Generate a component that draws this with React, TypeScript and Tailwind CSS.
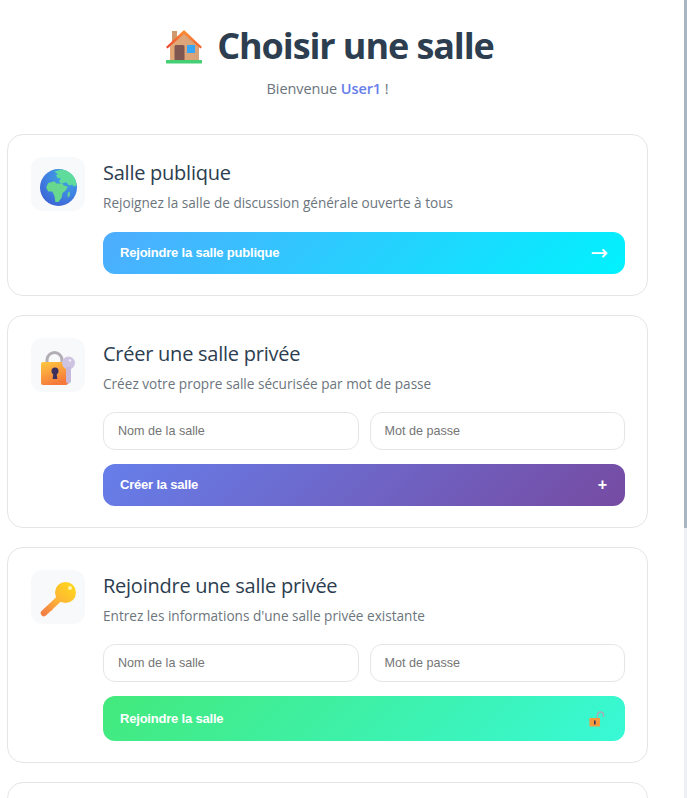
import type { ReactNode } from "react";

/* ── Emoji drawings ─────────────────────────────────────────────────────── */

const HouseEmoji = () => (
  <svg width="36" height="35" viewBox="0 0 36 35" className="shrink-0">
    <defs>
      <linearGradient id="wall" x1="0" y1="0" x2="1" y2="0">
        <stop offset="0" stopColor="#e2a877" />
        <stop offset="1" stopColor="#d8a27a" />
      </linearGradient>
      <linearGradient id="roof" x1="0" y1="1" x2="0.5" y2="0">
        <stop offset="0" stopColor="#ea3f30" />
        <stop offset="1" stopColor="#ff9333" />
      </linearGradient>
    </defs>
    <rect x="6" y="2" width="5" height="12" fill="#cf9a6c" />
    <path d="M4 17 18 4l15 13v15H4z" fill="url(#wall)" />
    <path d="M18 1 36 18l-1.500 1.500L18 5 1.500 19.500 0 18z" fill="url(#roof)" />
    <path d="M8.500 17.500q0-1.500 1.500-1.500h7q1.500 0 1.500 1.500V32h-10z" fill="#7f5650" />
    <rect x="21" y="16" width="8" height="8" fill="#38a6f7" />
    <rect x="0" y="31" width="36" height="3.500" rx="0.500" fill="#45cf74" />
  </svg>
);

const GlobeEmoji = () => (
  <svg width="37" height="37" viewBox="0 0 36 36" className="mt-[6px]">
    <defs>
      <radialGradient id="sea" cx="0.7" cy="0.2" r="0.95">
        <stop offset="0" stopColor="#3fa9dd" />
        <stop offset="0.55" stopColor="#3f82e2" />
        <stop offset="1" stopColor="#3b5bd0" />
      </radialGradient>
    </defs>
    <circle cx="18" cy="18" r="18" fill="url(#sea)" />
    <path
      d="M14 2.500 21 .5q9 1.500 13 8.500 1.500 4 1.500 7l-3 1-1-2-3 1-3-3-5 1-2-2 2-3-3 0-2-3 2-1z"
      fill="#5fdc9c"
    />
    <path
      d="M8 13.500l6-1.500 2 2 6 0 1 2 4 1-2 4-3 2-1 5-3 4-3 0-1-6-2-4-4 0-2-4z"
      fill="#67d88e"
    />
    <path d="M27 23l2-1 0 4-2 2z" fill="#67d88e" />
  </svg>
);

const LockEmoji = () => (
  <svg width="34" height="34" viewBox="0 0 34 34" className="mt-[6px]">
    <defs>
      <linearGradient id="lockBody" x1="0" y1="0" x2="0.4" y2="1">
        <stop offset="0" stopColor="#ffc93f" />
        <stop offset="1" stopColor="#f57a3c" />
      </linearGradient>
    </defs>
    <path
      d="M6 14V9a7.500 7.500 0 0 1 15 0v5"
      fill="none"
      stroke="#b3aeb6"
      strokeWidth="3"
    />
    <rect x="0" y="11" width="27" height="23" rx="2" fill="url(#lockBody)" />
    <circle cx="14" cy="20" r="3.500" fill="#3b2f5e" />
    <path d="M12.500 21h3l.8 7h-4.600z" fill="#3b2f5e" />
    <circle cx="27.500" cy="12" r="6.500" fill="#cfc3e2" />
    <circle cx="29" cy="9.500" r="1.200" fill="#f1ecf7" />
    <path d="M25 16h5v15l-2.500 2-2.500-2z" fill="#c6b9dc" />
  </svg>
);

const KeyEmoji = () => (
  <svg width="36" height="36" viewBox="0 0 36 36" className="mt-[6px]">
    <defs>
      <linearGradient id="keyFill" gradientUnits="userSpaceOnUse" x1="30" y1="4" x2="4" y2="32">
        <stop offset="0" stopColor="#ffd21f" />
        <stop offset="0.5" stopColor="#fdb437" />
        <stop offset="1" stopColor="#f37f45" />
      </linearGradient>
    </defs>
    <path
      d="M20 16 4 31"
      fill="none"
      stroke="url(#keyFill)"
      strokeWidth="6.500"
      strokeLinecap="round"
    />
    <path d="M10 24l3 3-2 2-3-3z" fill="url(#keyFill)" />
    <circle cx="25.500" cy="10.500" r="10.500" fill="url(#keyFill)" />
    <circle cx="30" cy="6" r="2" fill="#fff3b0" />
  </svg>
);

const OpenLockEmoji = () => (
  <svg width="16" height="16" viewBox="0 0 16 16">
    <path
      d="M8.500 8V4a3 3 0 0 1 6 0v2"
      fill="none"
      stroke="#a5adb5"
      strokeWidth="1.500"
    />
    <rect x="0.500" y="7" width="10.500" height="8.500" fill="#f79a3e" />
    <rect x="5" y="9.500" width="1.600" height="4" fill="#3b2f5e" />
  </svg>
);

/* ── Parts ──────────────────────────────────────────────────────────────── */

type CardProps = {
  icon: ReactNode;
  title: string;
  description: string;
  children?: ReactNode;
};

const RoomCard = ({ icon, title, description, children }: CardProps) => (
  <section className="rounded-[16px] border border-[#e3e6e9] bg-white pt-[22px] pr-[22px] pb-[21px] pl-[23px] flex gap-[18px]">
    <div className="w-[54px] h-[54px] rounded-[12px] bg-[#f8f9fa] flex items-center justify-center shrink-0">
      {icon}
    </div>
    <div className="flex-1 min-w-0">
      <h3 className="text-[20px] leading-[32px] font-medium text-[#2c3e50] font-['Open_Sans',sans-serif] tracking-[-0.25px]">
        {title}
      </h3>
      <p className="mt-[5px] text-[13.6px] leading-[18px] text-[#6c757d] font-['Open_Sans',sans-serif]">
        {description}
      </p>
      {children}
    </div>
  </section>
);

const RoomFields = () => (
  <div className="mt-[19px] flex gap-[11px]">
    <input
      placeholder="Nom de la salle"
      className="flex-1 min-w-0 h-[38px] px-[14px] rounded-[12px] border border-[#e3e6e9] bg-white text-[12.6px] font-['Liberation_Sans',sans-serif] placeholder:text-[#757575]"
    />
    <input
      placeholder="Mot de passe"
      className="flex-1 min-w-0 h-[38px] px-[14px] rounded-[12px] border border-[#e3e6e9] bg-white text-[12.6px] font-['Liberation_Sans',sans-serif] placeholder:text-[#757575]"
    />
  </div>
);

export default function App() {
  return (
    <div className="relative h-[798px] overflow-hidden bg-white">
      <div className="w-[641px] ml-[7px]">
        <header className="pt-[22px] pb-[34px] text-center">
          <h1 className="flex items-center justify-center gap-[15px] h-[48px] pl-[5px] text-[36px] font-bold text-[#2c3e50] font-['Open_Sans',sans-serif] tracking-[-1.1px]">
            <HouseEmoji />
            Choisir une salle
          </h1>
          <p className="mt-[8px] text-[14.5px] leading-[22px] text-[#6c757d] font-['Open_Sans',sans-serif] tracking-[-0.1px]">
            Bienvenue <span className="font-semibold text-[#667eea]">User1</span> !
          </p>
        </header>

        <div className="flex flex-col gap-[19px]">
          <RoomCard
            icon={<GlobeEmoji />}
            title="Salle publique"
            description="Rejoignez la salle de discussion générale ouverte à tous"
          >
            <button className="mt-[20px] w-full h-[42px] rounded-[12px] bg-[linear-gradient(135deg,#4facfe,#00f2fe)] flex items-center justify-between pl-[17px] pr-[17px] text-white text-[13px] tracking-[-0.2px] font-bold font-['Liberation_Sans',sans-serif]">
              <span>Rejoindre la salle publique</span>
              <span className="text-[21px] leading-none font-normal font-['DejaVu_Sans',sans-serif]">→</span>
            </button>
          </RoomCard>

          <RoomCard
            icon={<LockEmoji />}
            title="Créer une salle privée"
            description="Créez votre propre salle sécurisée par mot de passe"
          >
            <RoomFields />
            <button className="mt-[14px] w-full h-[42px] rounded-[12px] bg-[linear-gradient(135deg,#667eea,#764ba2)] flex items-center justify-between pl-[17px] pr-[18px] text-white text-[13px] tracking-[-0.2px] font-bold font-['Liberation_Sans',sans-serif]">
              <span>Créer la salle</span>
              <span className="text-[16px] leading-none">+</span>
            </button>
          </RoomCard>

          <RoomCard
            icon={<KeyEmoji />}
            title="Rejoindre une salle privée"
            description="Entrez les informations d'une salle privée existante"
          >
            <RoomFields />
            <button className="mt-[14px] w-full h-[45px] rounded-[12px] bg-[linear-gradient(135deg,#43e97b,#38f9d7)] flex items-center justify-between pl-[17px] pr-[20px] text-white text-[13px] tracking-[-0.2px] font-bold font-['Liberation_Sans',sans-serif]">
              <span>Rejoindre la salle</span>
              <OpenLockEmoji />
            </button>
          </RoomCard>

          <RoomCard icon={null} title="" description="" />
        </div>
      </div>

      {/* Scrollbar */}
      <div className="absolute top-0 right-0 bottom-0 w-[3px] bg-[#edf0f4]">
        <div className="h-[528px] bg-[#a9b5c1]" />
      </div>
    </div>
  );
}
